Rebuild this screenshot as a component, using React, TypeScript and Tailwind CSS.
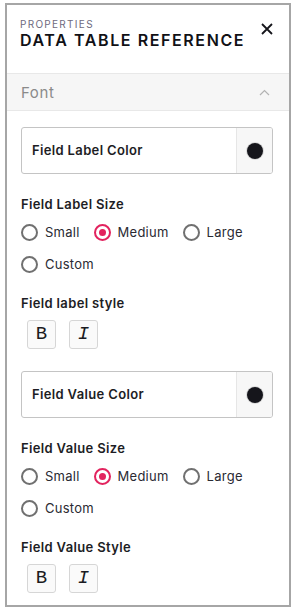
import { useState } from "react";

const font = { fontFamily: "Inter, 'Noto Sans', sans-serif" };

function Radio({ label, checked }: { label: string; checked?: boolean }) {
  return (
    <label className="flex items-center gap-[7px] text-[13px] leading-[17px] tracking-[0.25px] text-[#2a2a33]">
      <span
        className={
          checked
            ? "flex h-[17px] w-[17px] items-center justify-center rounded-full border-2 border-[#e2235e]"
            : "flex h-[17px] w-[17px] items-center justify-center rounded-full border-2 border-[#707070]"
        }
      >
        {checked && <span className="h-[7px] w-[7px] rounded-full bg-[#e2235e]" />}
      </span>
      {label}
    </label>
  );
}

function ColorField({ label }: { label: string }) {
  return (
    <div className="flex h-[47px] overflow-hidden rounded-[3px] border border-[#c4c4c4]">
      <div className="flex flex-1 items-center pl-[10px] text-[13px] font-semibold tracking-[0.35px] text-[#1d1d24]">
        {label}
      </div>
      <div className="flex w-[36px] items-center justify-center border-l border-[#e6e6e6] bg-[#f7f7f7]">
        <span className="h-[16px] w-[16px] rounded-full bg-[#15151b] shadow-[0_0_0_1px_#d9d9d9]" />
      </div>
    </div>
  );
}

function SizeGroup({ title }: { title: string }) {
  return (
    <div>
      <h3 className="text-[13px] font-semibold leading-[16px] tracking-[0.35px] text-[#1d1d24]">{title}</h3>
      <div className="mt-[12px] flex gap-[14px]">
        <Radio label="Small" />
        <Radio label="Medium" checked />
        <Radio label="Large" />
      </div>
      <div className="mt-[15px] flex">
        <Radio label="Custom" />
      </div>
    </div>
  );
}

function StyleGroup({ title }: { title: string }) {
  const btn =
    "flex h-[29px] w-[29px] items-center justify-center rounded-[3px] border border-[#d6d6d6] bg-[#fafafa] text-[19px] text-[#1b1b22]";
  return (
    <div>
      <h3 className="text-[13px] font-semibold leading-[16px] tracking-[0.35px] text-[#1d1d24]">{title}</h3>
      <div className="mt-[9px] flex gap-[13px] pl-[6px]" style={{ fontFamily: "'Liberation Mono', monospace" }}>
        <button className={btn}>B</button>
        <button className={btn + " italic"}>I</button>
      </div>
    </div>
  );
}

export default function App() {
  const [open] = useState(true);
  return (
    <div className="pl-[5px] pt-[3px]" style={font}>
      <div className="flex h-[604px] w-[286px] flex-col border-2 border-[#a6a6a6] bg-white">
        <div className="flex h-[68px] items-start justify-between pl-[13px] pr-[16px] pt-[13px]">
          <div>
            <p className="text-[10px] leading-[12px] tracking-[1.3px] text-[#6e6a80]">PROPERTIES</p>
            <h2 className="text-[16px] font-semibold leading-[20px] tracking-[1.6px] text-[#111116]">
              DATA TABLE REFERENCE
            </h2>
          </div>
          <svg className="mt-[5px]" width="12" height="12" viewBox="0 0 12 12" fill="none" stroke="#15151b" strokeWidth="1.8">
            <path d="M1 1l10 10M11 1L1 11" />
          </svg>
        </div>
        <div className="flex h-[38px] items-center justify-between border-y border-[#e8e8e8] bg-[#f6f6f6] pl-[14px] pr-[19px]">
          <span className="pt-[2px] text-[15px] tracking-[0.6px] text-[#8a8a8a]">Font</span>
          <svg width="11" height="7" viewBox="0 0 11 7" fill="none" stroke="#b3b3b3" strokeWidth="1.2">
            <path d="M1 6l4.5-4.5L10 6" />
          </svg>
        </div>
        {open && (
          <div className="flex flex-col gap-[22px] pl-[14px] pr-[16px] pt-[16px]">
            <ColorField label="Field Label Color" />
            <SizeGroup title="Field Label Size" />
            <StyleGroup title="Field label style" />
            <ColorField label="Field Value Color" />
            <SizeGroup title="Field Value Size" />
            <StyleGroup title="Field Value Style" />
          </div>
        )}
      </div>
    </div>
  );
}
